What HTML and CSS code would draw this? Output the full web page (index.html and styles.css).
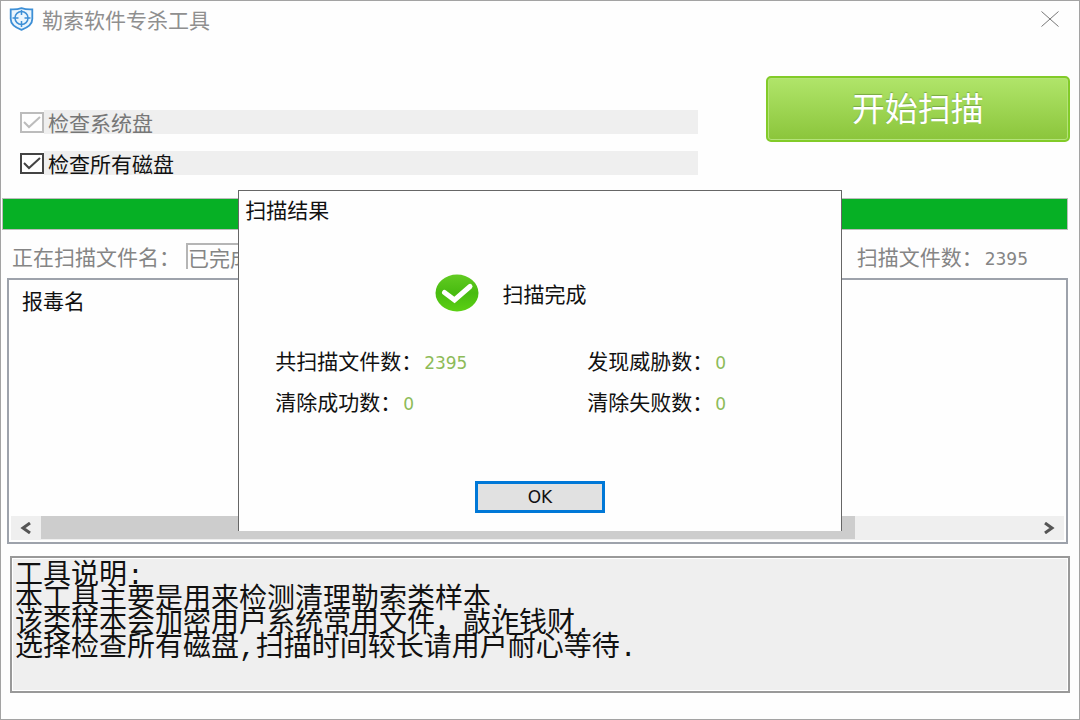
FILE: index.html
```html
<!DOCTYPE html>
<html lang="zh-CN">
<head>
    <meta charset="UTF-8">
    <meta name="viewport" content="width=device-width, initial-scale=1.0">
    <title>勒索软件专杀工具</title>
    <link rel="stylesheet" href="styles.css">
</head>
<body>
    <div class="window">
        <header class="titlebar">
            <svg class="logo" viewBox="0 0 24 24" fill="none" stroke="#3d8fd6">
                <path d="M12 1.2C9 2.2 5 2.6 1.2 2.4V12c0 5 4.5 8.5 10.8 10.8C18.3 20.500 22.8 17 22.8 12V2.4C19 2.6 15 2.2 12 1.2z" stroke-width="1.8" fill="#eaf5fd"/>
                <circle cx="12" cy="11" r="6.500" stroke-width="1.5"/>
                <path d="M12 3v5M12 14v6M3 11h6M15 11h6" stroke-width="1.5"/>
            </svg>
            <h1>勒索软件专杀工具</h1>
            <button class="close" aria-label="关闭">
                <svg viewBox="0 0 18 16" fill="none" stroke="#777"><path d="M.5.5l17 15M17.5.5l-17 15"/></svg>
            </button>
        </header>

        <section class="toolbar">
            <div class="options">
                <label class="option disabled"><input type="checkbox" checked disabled><span>检查系统盘</span></label>
                <label class="option"><input type="checkbox" checked><span>检查所有磁盘</span></label>
            </div>
            <button class="scan">开始扫描</button>
        </section>

        <progress class="progress" value="100" max="100" aria-label="扫描进度"></progress>

        <div class="status">
            <label for="file-name">正在扫描文件名：</label>
            <input type="text" id="file-name" value="已完成" readonly>
            <span class="count">扫描文件数：<span class="num">2395</span></span>
        </div>

        <div class="list">
            <table>
                <thead>
                    <tr><th>报毒名</th></tr>
                </thead>
            </table>
            <div class="scrollbar">
                <button class="arrow" aria-label="向左"><svg viewBox="0 0 12 12"><path d="M10 1L3 6l7 5"/></svg></button>
                <div class="track"><div class="thumb"></div></div>
                <button class="arrow" aria-label="向右"><svg viewBox="0 0 12 12"><path d="M2 1l7 5-7 5"/></svg></button>
            </div>
        </div>

        <textarea class="notes" aria-label="工具说明" readonly>工具说明:
本工具主要是用来检测清理勒索类样本.
该类样本会加密用户系统常用文件，敲诈钱财.
选择检查所有磁盘,扫描时间较长请用户耐心等待.</textarea>

        <div class="overlay">
            <div class="dialog" role="dialog" aria-labelledby="dialog-title">
                <h2 id="dialog-title">扫描结果</h2>
                <div class="done">
                    <svg class="tick" viewBox="0 0 44 38">
                        <defs>
                            <linearGradient id="green" x1="0" y1="0" x2="0" y2="1">
                                <stop offset="0" stop-color="#62cb22"/>
                                <stop offset=".5" stop-color="#48bb10"/>
                                <stop offset="1" stop-color="#5bd014"/>
                            </linearGradient>
                        </defs>
                        <ellipse cx="22" cy="19" rx="21.5" ry="18.5" fill="url(#green)"/>
                        <path d="M9.500 18.5l10 7.500L35 12.500" fill="none" stroke="#fff" stroke-width="5" stroke-linecap="round"/>
                    </svg>
                    <span>扫描完成</span>
                </div>
                <div class="results">
                    <p>共扫描文件数：<span class="num">2395</span></p>
                    <p>发现威胁数：<span class="num">0</span></p>
                    <p>清除成功数：<span class="num">0</span></p>
                    <p>清除失败数：<span class="num">0</span></p>
                </div>
                <button class="ok">OK</button>
            </div>
        </div>
    </div>
</body>
</html>
```

FILE: styles.css
```css
* {
    box-sizing: border-box;
}
body {
    margin: 0;
    font-family: "Noto Sans CJK SC", sans-serif;
    font-size: 21px;
    line-height: 24px;
    color: #111;
}
button, input, textarea {
    font: inherit;
    color: inherit;
    margin: 0;
    padding: 0;
}
h1, h2, p {
    margin: 0;
    font-size: 21px;
    font-weight: normal;
}
svg {
    display: block;
}
.window {
    position: relative;
    display: flex;
    flex-direction: column;
    min-height: 100vh;
    padding-bottom: 26px;
    border: 1px solid #a3a3a3;
    background: #fefefe;
}
.titlebar {
    display: flex;
    align-items: center;
    gap: 8px;
    height: 36px;
    padding: 0 20px 0 8px;
    color: #8f8f8f;
}
.logo {
    width: 25px;
    height: 24px;
}
.close {
    margin-left: auto;
    border: 0;
    background: none;
}
.close svg {
    width: 18px;
    height: 16px;
}

.toolbar {
    display: flex;
    align-items: flex-start;
    gap: 68px;
    padding: 39px 9px 0 19px;
}
.options {
    display: flex;
    flex: 1;
    flex-direction: column;
    gap: 17px;
    padding-top: 34px;
}
.option {
    display: flex;
    align-items: center;
    gap: 4px;
    height: 24px;
    background: linear-gradient(90deg, #fefefe 24px, #efefef 24px);
}
.option input {
    appearance: none;
    width: 24px;
    height: 21px;
    border: 2px solid #444;
    background: #fff url("data:image/svg+xml,%3Csvg xmlns='http://www.w3.org/2000/svg' viewBox='0 0 20 17'%3E%3Cpath d='M2 8l5 5L18 3' fill='none' stroke='%23444' stroke-width='2'/%3E%3C/svg%3E");
}
.option.disabled {
    color: #777;
}
.option.disabled input {
    opacity: .35;
}
.scan {
    width: 29%;
    height: 66px;
    padding-bottom: 4px;
    border: 2px solid #82cb28;
    border-radius: 5px;
    background: linear-gradient(#b0e56a, #8bc53b);
    box-shadow: inset 0 0 0 1px #b5e37a;
    color: #fff;
    font-size: 33px;
    text-shadow: 0 -1px 1px #79a844;
}

.progress {
    appearance: none;
    display: block;
    width: auto;
    height: 32px;
    margin: 23px 11px 0 1px;
    border: 1px solid #bcbcbc;
}
.progress::-webkit-progress-bar {
    background: #e6e6e6;
}
.progress::-webkit-progress-value {
    background: #06b025;
}

.status {
    display: flex;
    align-items: center;
    height: 48px;
    padding: 4px 11px 0;
    color: #858585;
}
.status input {
    width: 60%;
    height: 26px;
    margin-left: 6px;
    border: 2px solid #b5b5b5;
    border-width: 2px 0 0 2px;
    background: none;
}
.status .count {
    margin-left: auto;
    margin-right: 40px;
}
.num {
    margin-left: 2px;
    font-family: "DejaVu Sans", sans-serif;
    font-size: 17px;
    line-height: 17px;
}

.list {
    display: flex;
    flex-direction: column;
    justify-content: space-between;
    flex: 1;
    margin: 0 11px 0 6px;
    padding: 0 2px 2px;
    border: 2px solid #9da2ab;
}
.list th {
    padding: 6px 9px;
    font-weight: normal;
    text-align: left;
}
.scrollbar {
    display: flex;
    height: 24px;
    background: #efefef;
}
.arrow {
    display: flex;
    align-items: center;
    justify-content: center;
    width: 30px;
    border: 0;
    background: none;
}
.arrow svg {
    width: 12px;
    height: 12px;
    fill: none;
    stroke: #555;
    stroke-width: 3;
}
.track {
    flex: 1;
}
.thumb {
    width: 82%;
    height: 23px;
    background: #cdcdcd;
}

.notes {
    display: block;
    height: 137px;
    margin: 12px 9px 0;
    padding: 7px 3px;
    border: 2px solid #999;
    background: #efefef;
    box-shadow: inset 0 0 0 1px #fff;
    font-family: "Liberation Mono", "Noto Sans CJK SC", monospace;
    font-size: 28px;
    line-height: 24px;
    resize: none;
    overflow: hidden;
}

.overlay {
    position: absolute;
    inset: 0;
    display: flex;
    justify-content: center;
    align-items: flex-start;
    padding-top: 189px;
}
.dialog {
    display: flex;
    flex-direction: column;
    width: 56%;
    padding: 6px 6px 18px;
    border: 1px solid #666;
    border-bottom: 0;
    background: #fefefe;
}
.done {
    display: flex;
    align-items: center;
    justify-content: center;
    gap: 23px;
    margin: 53px 58px 0 0;
}
.tick {
    width: 44px;
    height: 38px;
}
.results {
    display: grid;
    grid-template-columns: 312px 1fr;
    row-gap: 17px;
    margin: 36px 0 0 30px;
}
.results .num {
    color: #8dbb58;
}
.ok {
    align-self: center;
    width: 130px;
    height: 32px;
    margin-top: 68px;
    border: 3px solid #0078d7;
    background: #e1e1e1;
    font-family: "DejaVu Sans", sans-serif;
    font-size: 17px;
}
```
